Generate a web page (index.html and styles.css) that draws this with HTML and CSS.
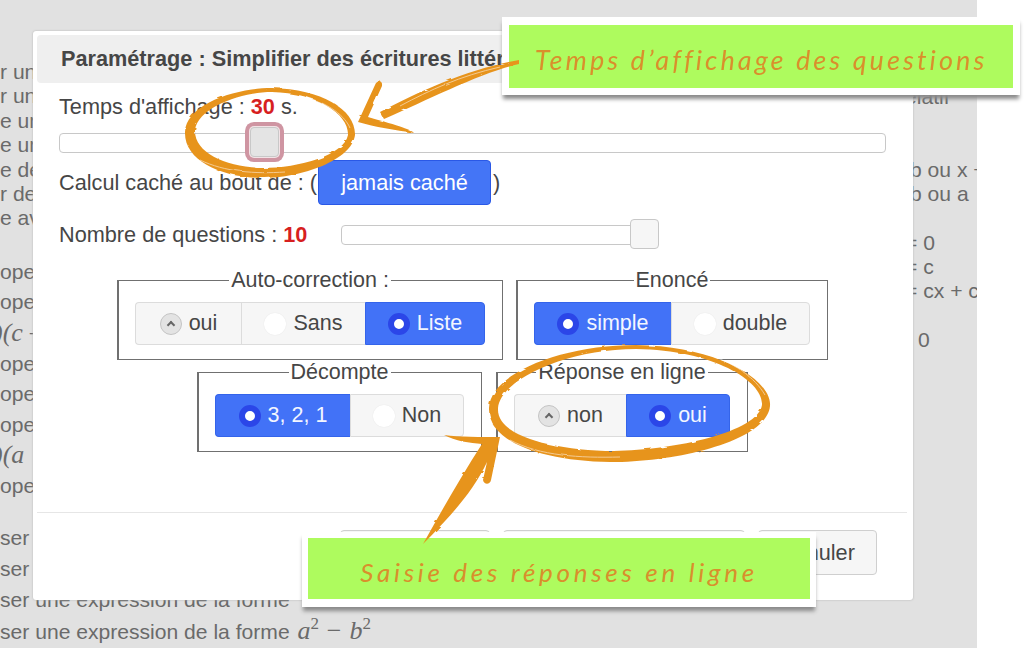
FILE: index.html
```html
<!DOCTYPE html>
<html lang="fr">
<head>
  <meta charset="UTF-8" />
  <meta name="viewport" content="width=device-width, initial-scale=1.0"/>
  <title>Paramétrage</title>
  <link rel="stylesheet" href="styles.css">
</head>
<body>
  <div class="page">

    <!-- page behind the modal -->
    <div class="backdrop">
      <div class="col-left">
        <div class="group-a">
          <div>r une</div>
          <div>r une</div>
          <div>e une</div>
          <div>e une</div>
          <div>e des</div>
          <div>r des</div>
          <div>e avec</div>
        </div>
        <div class="group-b">
          <div>ope</div>
          <div>ope</div>
          <div><i class="math math-cut">)(c</i> +</div>
          <div>ope</div>
          <div>ope</div>
          <div>ope</div>
          <div><i class="math math-cut">)(a</i></div>
          <div>ope</div>
        </div>
        <div class="group-c">
          <div>ser une</div>
          <div>ser une</div>
          <div>ser une expression de la forme</div>
          <div>ser une expression de la forme <i class="math">a<sup>2</sup></i> <span class="math">−</span> <i class="math">b<sup>2</sup></i></div>
        </div>
      </div>
      <div class="col-right">
        <div>elatif</div>
        <div>&nbsp;</div>
        <div>&nbsp;</div>
        <div class="nudge">b ou x +</div>
        <div class="nudge">b ou a</div>
        <div>&nbsp;</div>
        <div>= 0</div>
        <div>= c</div>
        <div>= cx + c</div>
        <div>&nbsp;</div>
        <div class="nudge-more">0</div>
      </div>
    </div>

    <!-- modal -->
    <div class="modal">
      <div class="modal-title">Paramétrage : Simplifier des écritures littérales</div>
      <div class="modal-body">
        <div class="field-label">Temps d'affichage : <b class="value">30</b> s.</div>
        <div class="track track-wide">
          <span class="handle handle-focus"></span>
        </div>
        <div class="hide-row">Calcul caché au bout de : (<button class="btn-blue">jamais caché</button>)</div>
        <div class="count-row">
          <div class="field-label">Nombre de questions : <b class="value">10</b></div>
          <div class="track track-short">
            <span class="handle handle-end"></span>
          </div>
        </div>

        <div class="sets sets-first">
          <fieldset>
            <legend>Auto-correction :</legend>
            <div class="segs segs-auto">
              <label class="seg"><span class="radio-up"></span>oui</label>
              <label class="seg"><span class="radio"></span>Sans</label>
              <label class="seg on"><span class="radio-on"></span>Liste</label>
            </div>
          </fieldset>
          <fieldset>
            <legend>Enoncé</legend>
            <div class="segs segs-enonce">
              <label class="seg on"><span class="radio-on"></span>simple</label>
              <label class="seg"><span class="radio"></span>double</label>
            </div>
          </fieldset>
        </div>
        <div class="sets sets-second">
          <fieldset>
            <legend>Décompte</legend>
            <div class="segs segs-decompte">
              <label class="seg on"><span class="radio-on"></span>3, 2, 1</label>
              <label class="seg"><span class="radio"></span>Non</label>
            </div>
          </fieldset>
          <fieldset>
            <legend>Réponse en ligne</legend>
            <div class="segs segs-reponse">
              <label class="seg"><span class="radio-up"></span>non</label>
              <label class="seg on"><span class="radio-on"></span>oui</label>
            </div>
          </fieldset>
        </div>
      </div>
      <div class="modal-footer">
        <button class="btn btn-1"></button>
        <button class="btn btn-2"></button>
        <button class="btn btn-3">Annuler</button>
      </div>
    </div>

    <!-- annotations pasted on top -->
    <div class="note note-top">Temps d’affichage des questions</div>
    <div class="note note-bottom">Saisie des réponses en ligne</div>

    <svg class="strokes" width="1024" height="648" viewBox="0 0 1024 648">
      <defs>
        <filter id="brush" x="-5%" y="-5%" width="110%" height="110%">
          <feTurbulence type="fractalNoise" baseFrequency="0.07 0.16" numOctaves="2" seed="4"/>
          <feDisplacementMap in="SourceGraphic" scale="2.5"/>
        </filter>
      </defs>
      <g filter="url(#brush)">
        <g fill="#e7941f" fill-rule="evenodd">
          <!-- circle round the first slider -->
          <path d="M185,132 C186,104 236,88 272,88 C322,89 356,110 355,135 C352,160 302,178 262,178 C220,177 184,160 185,132 Z
                   M195,130 C198,107 242,92 272,92 C317,93 349,114 348,135 C344,155 300,168 262,168 C226,167 194,153 195,130 Z"/>
          <!-- arrow to the first slider -->
          <path d="M358,122 L375,85 C377,80 383,80 382,86 L368,117 C400,126 412,130 414,133 C395,130 375,127 358,122 Z"/>
          <path d="M380,112 C420,91 468,69 519,60 L519,64 C480,73 430,99 384,119 Z"/>
          <!-- circle round the answer buttons -->
          <path d="M489,408 C490,374 560,345 636,345 C718,346 772,380 770,406 C767,440 680,462 610,462 C542,461 488,442 489,408 Z
                   M498,408 C500,380 566,349 636,349 C715,350 764,382 762,405 C758,432 675,450 614,451 C552,450 496,436 498,408 Z"/>
          <!-- arrow to the answer buttons -->
          <path d="M500,437 C480,437 460,437 444,435 C455,441 470,443 482,444 C462,475 442,510 423,544 C452,515 474,490 487,462 L483,480 C484,485 490,485 491,480 Z"/>
        </g>
        <g fill="none" stroke="#fff" stroke-width="1" opacity=".5">
          <path d="M200,160 C225,172 255,174 285,172"/>
          <path d="M300,96 C330,102 346,118 350,128"/>
          <path d="M510,440 C540,456 580,458 620,457"/>
          <path d="M700,352 C735,362 755,378 765,395"/>
          <path d="M400,106 C430,90 460,76 500,67"/>
        </g>
      </g>
    </svg>
  </div>
</body>
</html>
```

FILE: styles.css
```css
body {
  margin: 0;
  font-family: 'Liberation Sans', Arial, sans-serif;
  background: #fff;
}

.page {
  position: relative;
  width: 1024px;
  height: 648px;
  overflow: hidden;
  filter: blur(0.35px);
}

/* Page behind */
.backdrop {
  display: flex;
  width: 977px;
  height: 648px;
  overflow: hidden;
  background: #e1e1e1;
  color: #6a6a6a;
  font-size: 21.1px;
  white-space: nowrap;
}

.col-left {
  width: 905px;
  flex-shrink: 0;
  padding-top: 60px;
}

.col-left .group-a div {
  height: 24.4px;
  line-height: 24.4px;
}

.group-b {
  margin-top: 26px;
}

.group-b div {
  height: 30.6px;
  line-height: 30.6px;
}

.group-c {
  margin-top: 21px;
}

.group-c div {
  height: 31px;
  line-height: 31px;
}

.math {
  font-family: 'Liberation Serif', serif;
  font-size: 26px;
  margin-left: 2px;
}

.math-cut {
  margin-left: -6px;
}

.math sup {
  font-size: 17px;
  font-style: normal;
  line-height: 0;
}

.col-right {
  padding-top: 85px;
}

.col-right div {
  height: 24.3px;
  line-height: 24.3px;
}

.col-right .nudge {
  padding-left: 5px;
}

.col-right .nudge-more {
  padding-left: 13px;
}

/* Modal */
.modal {
  position: absolute;
  top: 31px;
  left: 33px;
  width: 880px;
  height: 569px;
  box-sizing: border-box;
  display: flex;
  flex-direction: column;
  padding: 4px;
  background: #fff;
  border-radius: 3px;
  box-shadow: 0 0 2px #aaa;
  color: #464646;
  font-size: 21.7px;
}

.modal-title {
  height: 48px;
  line-height: 48px;
  padding-left: 24px;
  border-radius: 4px;
  background: #efefef;
  font-weight: bold;
  white-space: nowrap;
  overflow: hidden;
}

.modal-body {
  flex: 1;
  padding: 12px 24px 0 22px;
}

.field-label {
  line-height: 24px;
}

.value {
  color: #d71f1f;
}

.track {
  position: relative;
  box-sizing: border-box;
  height: 20px;
  background: #fff;
  border: 1px solid #c8c8c8;
  border-radius: 4px;
}

.track-wide {
  margin-top: 14px;
  width: 827px;
}

.track-short {
  width: 304px;
}

.handle {
  position: absolute;
  box-sizing: border-box;
  top: -7px;
  width: 29px;
  height: 30px;
  background: #f6f6f6;
  border: 1px solid #c8c8c8;
  border-radius: 4px;
}

.handle-focus {
  left: 23%;
  background: #e4e4e4;
  box-shadow: 0 0 0 1px #f3e3e6, 0 0 0 5px #cf95a2;
}

.handle-end {
  right: -15px;
}

.hide-row {
  display: flex;
  align-items: center;
  margin-top: 7px;
  height: 45px;
  white-space: pre;
}

.btn-blue {
  box-sizing: border-box;
  width: 173px;
  height: 45px;
  margin-left: 1px;
  margin-right: 2px;
  background: #4475f6;
  border: 1px solid #2a58e6;
  border-radius: 4px;
  color: #fff;
  font: inherit;
}

.count-row {
  display: flex;
  align-items: center;
  margin-top: 16px;
  height: 28px;
  white-space: pre;
}

.count-row .track {
  margin-left: 34px;
}

.sets {
  display: flex;
  justify-content: center;
  margin-left: 1px;
}

.sets-first {
  margin-top: 21px;
  gap: 13px;
}

.sets-second {
  margin-top: 2px;
  gap: 14px;
}

fieldset {
  margin: 0;
  padding: 11px 17px 14px 16px;
  border: 1px solid #707070;
  border-left-width: 2px;
  min-width: 0;
}

legend {
  margin: 0 auto;
  padding: 0 2px;
  line-height: 21px;
  font-size: 21.5px;
}

/* Segmented radios */
.segs {
  display: grid;
  height: 43px;
}

.segs-auto { grid-template-columns: 106px 124px 120px; }
.segs-enonce { grid-template-columns: 137px 139px; }
.segs-decompte { grid-template-columns: 135px 114px; }
.segs-reponse { grid-template-columns: 112px 104px; }

.seg {
  display: flex;
  align-items: center;
  justify-content: center;
  gap: 7px;
  background: #f6f6f6;
  border: 1px solid #dcdcdc;
  border-right-width: 0;
  font-size: 21.5px;
}

.seg:first-child {
  border-radius: 4px 0 0 4px;
}

.seg:last-child {
  border-right-width: 1px;
  border-radius: 0 4px 4px 0;
}

.seg.on {
  background: #4272f7;
  border-color: #3464ea;
  color: #f3f6ff;
}

.radio,
.radio-on,
.radio-up {
  position: relative;
  box-sizing: border-box;
  width: 22px;
  height: 22px;
  border-radius: 50%;
}

.radio {
  background: #fff;
  box-shadow: 0 0 1px #ddd;
}

.radio-on {
  background: #fff;
  border: 6px solid #2b46e8;
}

.radio-up {
  background: #e3e3e3;
  border: 1px solid #c4c4c4;
}

.radio-up::after {
  content: "";
  position: absolute;
  top: 8px;
  left: 7px;
  width: 6px;
  height: 6px;
  border-top: 2px solid #666;
  border-left: 2px solid #666;
  transform: rotate(45deg);
  box-sizing: border-box;
}

/* Footer */
.modal-footer {
  display: flex;
  justify-content: flex-end;
  gap: 13px;
  padding: 17px 30px 21px 0;
  border-top: 1px solid #e6e6e6;
  margin-right: 2px;
}

.btn {
  box-sizing: border-box;
  height: 45px;
  background: #f6f6f6;
  border: 1px solid #cfcfcf;
  border-radius: 4px;
  color: #464646;
  font: inherit;
}

.btn-1 { width: 150px; }
.btn-2 { width: 242px; }
.btn-3 { width: 119px; }

/* Notes */
.note {
  position: absolute;
  box-sizing: border-box;
  display: flex;
  align-items: center;
  justify-content: center;
  padding-top: 6px;
  background: #aefb5e;
  border: solid #fff;
  box-shadow: 0 5px 4px -1px #8a8a8a;
  color: #d98f2c;
  font-family: Lato, sans-serif;
  font-style: italic;
  white-space: nowrap;
}

.note-top {
  top: 17px;
  left: 502px;
  width: 518px;
  height: 78px;
  border-width: 8px 7px 7px 7px;
  font-size: 27px;
  letter-spacing: 3.1px;
}

.note-bottom {
  top: 532px;
  left: 302px;
  width: 514px;
  height: 75px;
  border-width: 6px 6px 8px 6px;
  font-size: 26px;
  letter-spacing: 3.7px;
}

.strokes {
  position: absolute;
  top: 0;
  left: 0;
}
```
